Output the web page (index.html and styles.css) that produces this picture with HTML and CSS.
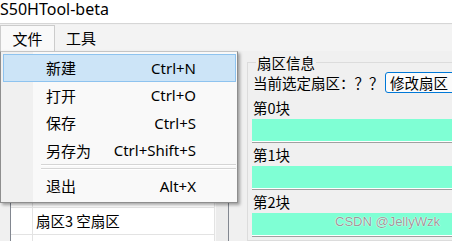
FILE: index.html
```html
<!DOCTYPE html>
<html lang="zh-CN">
<head>
<meta charset="utf-8">
<title>S50HTool-beta</title>
<link rel="stylesheet" href="styles.css">
</head>
<body>
<div class="window">
  <div class="titlebar">S50HTool-beta</div>
  <div class="menubar">
    <div class="menubar-item active">文件</div>
    <div class="menubar-item">工具</div>
  </div>
  <div class="main">
    <div class="left-pane">
      <div class="tree">
        <div class="tree-body">
          <div class="tree-row"><span class="indent"></span><span class="cell"></span></div>
          <div class="tree-row"><span class="indent"></span><span class="cell"></span></div>
          <div class="tree-row"><span class="indent"></span><span class="cell"></span></div>
          <div class="tree-row"><span class="indent"></span><span class="cell">扇区3 空扇区</span></div>
          <div class="tree-row"><span class="indent"></span><span class="cell"></span></div>
        </div>
        <div class="scrollbar"></div>
      </div>
    </div>
    <fieldset class="group">
      <legend class="group-title">扇区信息</legend>
      <div class="current-row">
        <span class="current-label">当前选定扇区：？？</span>
        <button class="btn-focus">修改扇区</button>
      </div>
      <div class="block">
        <div class="block-label">第0块</div>
        <div class="block-data"></div>
      </div>
      <div class="block">
        <div class="block-label">第1块</div>
        <div class="block-data"></div>
      </div>
      <div class="block">
        <div class="block-label">第2块</div>
        <div class="block-data"></div>
      </div>
      <div class="block">
        <div class="block-label">第3块</div>
        <div class="block-data"></div>
      </div>
    </fieldset>
  </div>

  <div class="dropdown">
    <div class="dd-item selected"><span>新建</span><span>Ctrl+N</span></div>
    <div class="dd-item"><span>打开</span><span>Ctrl+O</span></div>
    <div class="dd-item"><span>保存</span><span>Ctrl+S</span></div>
    <div class="dd-item"><span>另存为</span><span>Ctrl+Shift+S</span></div>
    <div class="dd-sep"></div>
    <div class="dd-item"><span>退出</span><span>Alt+X</span></div>
  </div>

  <div class="watermark">CSDN @JellyWzk</div>
</div>
</body>
</html>
```

FILE: styles.css
```css
* { box-sizing: border-box; }

html, body {
  margin: 0;
  padding: 0;
}

body {
  width: 452px;
  height: 241px;
  overflow: hidden;
  background: #f0f0f0;
  font-family: "Noto Sans", "Noto Sans CJK SC", sans-serif;
  color: #000;
}

.window {
  position: relative;
  width: 452px;
  height: 241px;
  overflow: hidden;
}

.titlebar {
  height: 25px;
  background: #ffffff;
  border-bottom: 1px solid #d6d6d6;
  font-size: 16px;
  line-height: 20px;
  padding-left: 0;
  white-space: nowrap;
  margin-top: -1px;
}

.menubar {
  display: flex;
  height: 26px;
  margin-top: 1px;
  background: #f3f3f3;
  font-family: "Noto Sans CJK SC", sans-serif;
  font-size: 15px;
}

.menubar-item {
  height: 26px;
  line-height: 25px;
  padding: 0 11px 0 11px;
}

.menubar-item.active {
  width: 55px;
  height: 27px;
  text-align: center;
  padding: 0;
  background: #f9f9f9;
  border: 1px solid #cccccc;
  border-bottom: none;
}

.main {
  display: flex;
  height: 190px;
}

.left-pane {
  width: 247px;
  flex: none;
  padding: 75px 0 0 10px;
}

.tree {
  display: flex;
  width: 219px;
  height: 200px;
  background: #ffffff;
  border: 1px solid #828790;
}

.tree-body {
  flex: 1;
  font-family: "Noto Sans CJK SC", sans-serif;
  font-size: 14.5px;
}

.tree-row {
  display: flex;
  height: 27px;
  border-bottom: 1px solid #e3e3e3;
}

.indent {
  width: 22px;
  flex: none;
  border-right: 1px solid #e3e3e3;
}

.cell {
  flex: 1;
  line-height: 26px;
  padding-left: 3px;
  border-right: 1px solid #e3e3e3;
  white-space: nowrap;
}

.scrollbar {
  width: 13px;
  flex: none;
  background: #ececec;
  border-left: 1px solid #f8f8f8;
}

.group {
  flex: 1;
  margin: 3px -20px 0 0;
  padding: 1px 0 0 5px;
  border: 1px solid #dcdcdc;
  min-width: 0;
}

.group-title {
  margin-left: 3px;
  padding: 0 1px;
  font-family: "Noto Sans CJK SC", sans-serif;
  font-size: 14.5px;
  line-height: 17px;
}

.current-row {
  display: flex;
  align-items: flex-start;
  height: 24px;
  font-family: "Noto Sans CJK SC", sans-serif;
  font-size: 14.5px;
  white-space: nowrap;
}

.current-label {
  line-height: 21px;
  width: 132px;
  flex: none;
}

.btn-focus {
  height: 21px;
  padding: 0 4px;
  margin: 0;
  border: 1px solid #0078d7;
  border-radius: 3px;
  background: #fbfbfb;
  font-family: "Noto Sans CJK SC", sans-serif;
  font-size: 14.5px;
  line-height: 17px;
  color: #000;
  white-space: nowrap;
  min-width: 90px;
  text-align: left;
}

.block-label {
  height: 23px;
  line-height: 23px;
  font-family: "Noto Sans CJK SC", sans-serif;
  font-size: 14.5px;
}

.block-data {
  height: 24px;
  background: #7fffd4;
  border-bottom: 1px solid #a0a0a0;
  box-shadow: inset 0 -1px 0 #ffffff;
  margin-left: -1px;
}

.dropdown {
  position: absolute;
  left: 0;
  top: 51px;
  width: 238px;
  height: 152px;
  padding: 2px 1px 0 2px;
  background: linear-gradient(to right, #f0f0f0 0, #f0f0f0 32px, #f9f9f9 32px);
  border: 1px solid #8e8e8e;
  border-top-color: #c4c4c4;
  box-shadow: 2px 2px 3px rgba(0, 0, 0, 0.35);
  font-size: 15px;
}

.dd-item {
  display: flex;
  justify-content: space-between;
  align-items: center;
  height: 27.5px;
  padding: 0 39px 0 42px;
  border: 1px solid transparent;
  font-family: "Noto Sans", "Noto Sans CJK SC", sans-serif;
  white-space: nowrap;
}

.dd-item span:first-child {
  font-family: "Noto Sans CJK SC", sans-serif;
}

.dd-item.selected {
  background: #cce4f7;
  border-color: #8ec3ef;
}

.dd-sep {
  height: 8px;
  margin-left: 38px;
  border-top: 4px solid transparent;
  background: linear-gradient(#d5d5d5 0, #d5d5d5 1px, #ffffff 1px, #ffffff 2px, transparent 2px);
}

.watermark {
  position: absolute;
  left: 335px;
  top: 214px;
  font-family: "Liberation Sans", sans-serif;
  font-size: 13px;
  color: rgba(140, 140, 140, 0.9);
  text-shadow: 0 0 1px #ffffff, 0 0 1px #ffffff;
  white-space: nowrap;
}
```
